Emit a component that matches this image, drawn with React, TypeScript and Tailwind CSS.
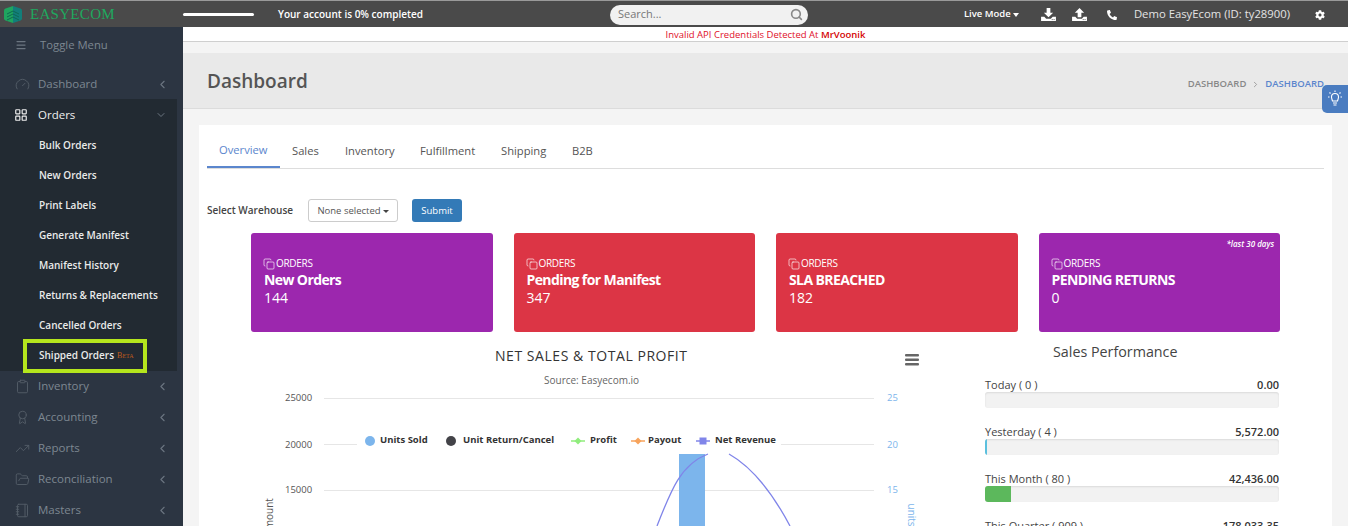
import { FC, ReactNode } from 'react';
import { Gauge, LayoutGrid, Clipboard, Award, TrendingUp, FolderOpen, Notebook, ChevronLeft, ChevronDown, ChevronRight, Menu, Search, Copy } from 'lucide-react';
import { FaPhone, FaCog } from 'react-icons/fa';

const subItems = ['Bulk Orders', 'New Orders', 'Print Labels', 'Generate Manifest', 'Manifest History', 'Returns & Replacements', 'Cancelled Orders'];

const lowerMenu = [
  { label: 'Inventory', icon: <Clipboard size={15} strokeWidth={1.5} /> },
  { label: 'Accounting', icon: <Award size={15} strokeWidth={1.5} /> },
  { label: 'Reports', icon: <TrendingUp size={15} strokeWidth={1.5} /> },
  { label: 'Reconciliation', icon: <FolderOpen size={15} strokeWidth={1.5} /> },
  { label: 'Masters', icon: <Notebook size={15} strokeWidth={1.5} /> },
];

const MenuRow: FC<{ label: string; icon: ReactNode }> = ({ label, icon }) => (
  <div className="h-[31px] flex items-center pb-[1px] pl-[15px] pr-[14px] text-[#7d8791] text-[11.5px]">
    <span className="w-[23px] shrink-0 text-[#535d68]">{icon}</span>
    <span className="flex-1">{label}</span>
    <ChevronLeft size={13} className="text-[#6b7580]" />
  </div>
);

const TrayIcon: FC<{ up?: boolean; className?: string }> = ({ up, className }) => (
  <svg width="15" height="13" viewBox="0 0 16 14" fill="white" className={className}>
    {up ? <path d="M8 0l5 5h-3v5H6V5H3z" /> : <path d="M6 0h4v5h3l-5 5-5-5h3z" />}
    <path d="M0 9.5h3.5l2 2h5l2-2H16V14H0z" />
    <rect x="11.5" y="12" width="1" height="1" fill="#4a4a4a" />
    <rect x="13.5" y="12" width="1" height="1" fill="#4a4a4a" />
  </svg>
);

const LegendMark: FC<{ color: string; shape: 'diamond' | 'square' }> = ({ color, shape }) => (
  <svg width="14" height="8" viewBox="0 0 14 8" className="shrink-0">
    <line x1="0" x2="14" y1="4" y2="4" stroke={color} strokeWidth="1.5" />
    {shape === 'diamond' ? <path d="M7 0.5l3.5 3.5-3.5 3.5-3.5-3.5z" fill={color} /> : <rect x="3.5" y="0.5" width="7" height="7" fill={color} />}
  </svg>
);

const StatCard: FC<{ title: string; value: string; color: string; note?: string }> = ({ title, value, color, note }) => (
  <div className={`${color} relative h-[99px] rounded-[3px] pl-[13px] pt-[24px] text-white`}>
    {note && <span className="absolute right-[6px] top-[5px] text-[8px] italic font-semibold">{note}</span>}
    <div className="flex items-center text-[10px] leading-[13px] tracking-[-0.3px]">
      <Copy size={12} strokeWidth={1.3} className="-ml-[1px] mr-[1px]" />
      ORDERS
    </div>
    <div className="text-[14px] leading-[20px] font-bold tracking-[-0.6px]">{title}</div>
    <div className="text-[14px] leading-[18px] -mt-[1px]">{value}</div>
  </div>
);

const PerfRow: FC<{ label: string; value: string; bar?: ReactNode }> = ({ label, value, bar }) => (
  <div className="h-[47px]">
    <div className="flex justify-between text-[11px] leading-[15px] text-[#444]">
      <span>{label}</span>
      <span className="font-semibold text-[#333]">{value}</span>
    </div>
    <div className="h-[16px] rounded-[3px] bg-[#f2f2f2] shadow-[inset_0_1px_2px_rgba(0,0,0,0.1)] overflow-hidden">{bar}</div>
  </div>
);

const App: FC = () => {
  return (
    <div className="w-[1348px] h-[526px] overflow-hidden bg-[#f4f4f4] font-['Open_Sans',sans-serif]">
      {/* top bar */}
      <div className="h-[27px] flex items-center bg-[#4a4a4a] border-t border-[#9a9a9a] pt-[1px] text-white">
        <div className="w-[183px] shrink-0 flex items-center pl-[4px]">
          <svg width="18" height="17" viewBox="0 0 18 17">
            <path d="M9 0 L1.5 2.5 Q0 3 0 4.5 L0 12.5 Q0 14 1.5 14.5 L9 17Z" fill="#1fa55f" />
            <path d="M9 0 L16.5 2.5 Q18 3 18 4.5 L18 12.5 Q18 14 16.5 14.5 L9 17Z" fill="#127e7a" />
            <path d="M3 8 L9 5 L15 8 M3 11 L9 8 L15 11 M3 14 L9 11 L15 14" fill="none" stroke="#0d6a52" strokeWidth="1" />
          </svg>
          <span className="ml-[8px] font-['Liberation_Serif',serif] text-[15px] tracking-[0.3px] text-[#20a85f]">EASYECOM</span>
        </div>
        <div className="w-[71px] h-[3px] rounded-full bg-white" />
        <span className="ml-[24px] text-[10px] font-semibold">Your account is 0% completed</span>
        <div className="ml-[187px] w-[198px] h-[20px] rounded-full bg-[#f1f1f1] flex items-center justify-between pl-[8px] pr-[5px] text-[#777] text-[11px]">
          Search...
          <Search size={13} strokeWidth={3} className="text-[#888]" />
        </div>
        <span className="ml-[156px] w-[55px] flex items-center justify-between text-[9.5px] font-semibold">
          Live Mode
          <i className="border-x-[3.5px] border-t-[4px] border-x-transparent border-t-white" />
        </span>
        <TrayIcon className="ml-[22px]" />
        <TrayIcon up className="ml-[16px]" />
        <FaPhone size={10} className="ml-[20px] scale-x-[-1]" />
        <span className="ml-[17px] text-[11.3px] text-[#e4e4e4]">Demo EasyEcom (ID: ty28900)</span>
        <FaCog size={10} className="ml-[25px]" />
      </div>

      <div className="flex h-[499px]">
        {/* sidebar */}
        <div className="w-[183px] shrink-0 bg-[#2c3542]">
          <div className="h-[35px] flex items-center pl-[15px] text-[#7d8791] text-[11.3px] pt-[1px]">
            <Menu size={12} strokeWidth={2.5} className="text-[#6b7580] mr-[13px]" />
            Toggle Menu
          </div>
          <div className="mt-[6px] pt-[1px] h-[31px]">
            <MenuRow label="Dashboard" icon={<Gauge size={15} strokeWidth={1.5} />} />
          </div>
          <div className="w-[177px] h-[272px] bg-[#222a32] text-white">
            <div className="h-[31px] flex items-center pt-[1px] pl-[14px] pr-[10px] text-[11.5px] text-[#eeeeee]">
              <LayoutGrid size={14} strokeWidth={2} className="mr-[10px]" />
              <span className="flex-1">Orders</span>
              <ChevronDown size={12} className="text-[#6b7580]" />
            </div>
            {subItems.map((item) => (
              <div key={item} className="h-[30px] flex items-center pt-[1px] pl-[39px] text-[10px] font-semibold text-[#eaeaea]">{item}</div>
            ))}
            <div className="relative ml-[23px] w-[124px] h-[34px] -mt-[1px] border-[4px] border-[#b5e61d] flex items-center pb-[1px] pl-[12px] text-[10px] font-semibold text-[#eaeaea]">
              Shipped Orders
              <span className="ml-[3px] text-[8px] font-normal [font-variant:small-caps] text-[#c05a1c] font-['Liberation_Serif',serif]">Beta</span>
            </div>
          </div>
          {lowerMenu.map((m) => <MenuRow key={m.label} {...m} />)}
        </div>

        {/* main */}
        <div className="relative flex-1 min-w-0">
          <div className="h-[14px] bg-white text-center text-[9.5px] leading-[16px] text-[#e0102a]">
            Invalid API Credentials Detected At <span className="font-semibold text-[#d40000]">MrVoonik</span>
          </div>
          <div className="h-px bg-[#cfcfcf]" />
          <div className="mt-[11px] h-[56px] bg-[#e9e9e9] border-b border-[#dcdcdc] flex items-center justify-between pl-[24px] pr-[24px]">
            <h1 className="text-[19px] font-semibold text-[#555] mt-[1px]">Dashboard</h1>
            <div className="flex items-center text-[9.5px] font-semibold text-[#888] mt-[8px]">
              DASHBOARD
              <ChevronRight size={9} strokeWidth={2} className="mx-[5px]" />
              <span className="text-[#5b86cd]">DASHBOARD</span>
            </div>
          </div>
          <div className="absolute left-[1139px] top-[58px] w-[26px] h-[28px] rounded-l-[5px] bg-[#4a7cc0] flex items-center justify-center">
            <svg width="16" height="18" viewBox="0 0 16 18" fill="none" stroke="white" strokeWidth="1.1">
              <path d="M5.5 11 C5 9 4.5 8.5 4.5 7 a3.5 3.5 0 0 1 7 0 C11.5 8.5 11 9 10.5 11z" />
              <path d="M6 13h4 M6.5 15h3 M8 0.5v1.5 M2.5 2.5l1 1 M13.5 2.5l-1 1 M1 7h1.5 M13.5 7H15" />
            </svg>
          </div>

          {/* content card */}
          <div className="ml-[16px] mr-[16px] mt-[16px] h-[420px] bg-white px-[8px] overflow-hidden">
            <div className="h-[44px] border-b border-[#ddd] flex items-center text-[11.2px] text-[#555] pl-[12px] pt-[9px]">
              <span className="relative w-[48px] text-[#5b86cd] -mt-[2px] whitespace-nowrap">
                Overview
                <span className="absolute -left-[12px] w-[73px] top-[24px] h-[2px] bg-[#5b86cd]" />
              </span>
              <span className="ml-[25px] w-[27px]">Sales</span>
              <span className="ml-[26px] w-[50px]">Inventory</span>
              <span className="ml-[25px] w-[56px]">Fulfillment</span>
              <span className="ml-[25px] w-[46px]">Shipping</span>
              <span className="ml-[25px]">B2B</span>
            </div>
            <div className="mt-[30px] flex items-center text-[10px] text-[#444]">
              <span className="font-semibold w-[101px]">Select Warehouse</span>
              <div className="w-[90px] h-[23px] rounded-[3px] border border-[#ccc] flex items-center justify-center gap-[2px] pt-[1px] text-[9.5px] text-[#555]">
                None selected
                <i className="border-x-[3px] border-t-[3px] border-x-transparent border-t-[#444]" />
              </div>
              <div className="ml-[14px] w-[50px] h-[23px] rounded-[3px] bg-[#337ab7] flex items-center justify-center pt-[1px] text-[9.5px] text-white">Submit</div>
            </div>
            <div className="mt-[11px] ml-[44px] w-[1029px] grid grid-cols-4 gap-[21px]">
              <StatCard title="New Orders" value="144" color="bg-[#9c27ae]" />
              <StatCard title="Pending for Manifest" value="347" color="bg-[#dc3545]" />
              <StatCard title="SLA BREACHED" value="182" color="bg-[#dc3545]" />
              <StatCard title="PENDING RETURNS" value="0" color="bg-[#9c27ae]" note="*last 30 days" />
            </div>

            <div className="flex">
              {/* chart */}
              <div className="relative w-[778px] h-[200px] shrink-0">
                <svg width="778" height="200" className="absolute left-0 top-0" viewBox="0 0 778 200">
                  <g stroke="#e6e6e6" strokeWidth="1">
                    <line x1="117" x2="667" y1="66.5" y2="66.5" />
                    <line x1="117" x2="667" y1="112.5" y2="112.5" />
                    <line x1="117" x2="667" y1="158.5" y2="158.5" />
                  </g>
                  <rect x="472" y="122" width="26" height="78" fill="#7cb5ec" />
                  <path d="M450 194 C464 158 474 132 501 122" fill="none" stroke="#8085e9" strokeWidth="1.3" />
                  <path d="M522 122 C545 135 565 160 583 194" fill="none" stroke="#8085e9" strokeWidth="1.3" />
                  <rect x="698" y="22" width="14" height="2.5" rx="1" fill="#666" />
                  <rect x="698" y="26.5" width="14" height="2.5" rx="1" fill="#666" />
                  <rect x="698" y="31" width="14" height="2.5" rx="1" fill="#666" />
                </svg>
                <div className="absolute left-[288px] top-[13px] text-[14px] tracking-[0.55px] text-[#333]">NET SALES &amp; TOTAL PROFIT</div>
                <div className="absolute left-[337px] top-[41px] text-[10px] text-[#666]">Source: Easyecom.io</div>
                {[['25000', 59], ['20000', 106], ['15000', 151]].map(([t, y]) => (
                  <div key={t} className="absolute left-[78px] text-[9.5px] text-[#555]" style={{ top: Number(y) }}>{t}</div>
                ))}
                {[['25', 59], ['20', 106], ['15', 151]].map(([t, y]) => (
                  <div key={t} className="absolute left-[680px] text-[9.5px] text-[#7cb5ec]" style={{ top: Number(y) }}>{t}</div>
                ))}
                <div className="absolute left-[62px] top-[196px] -rotate-90 origin-left text-[10px] text-[#555]">Amount</div>
                <div className="absolute left-[704px] top-[164px] rotate-90 origin-left text-[10px] text-[#7cb5ec]">units</div>
                <div className="absolute left-[150px] top-[97px] w-[424px] h-[22px] bg-white flex items-center pl-[8px] pt-[1px] text-[9.5px] font-bold text-[#333]">
                  <i className="w-[10px] h-[10px] rounded-full bg-[#7cb5ec] mr-[5px]" />
                  <span className="w-[49px]">Units Sold</span>
                  <i className="ml-[17px] w-[10px] h-[10px] rounded-full bg-[#434348] mr-[7px]" />
                  <span className="w-[92px]">Unit Return/Cancel</span>
                  <span className="ml-[16px] mr-[5px] flex"><LegendMark color="#90ed7d" shape="diamond" /></span>
                  <span className="w-[25px] whitespace-nowrap">Profit</span>
                  <span className="ml-[16px] mr-[3px] flex"><LegendMark color="#f7a35c" shape="diamond" /></span>
                  <span className="w-[33px]">Payout</span>
                  <span className="ml-[15px] mr-[5px] flex"><LegendMark color="#8085e9" shape="square" /></span>
                  <span className="whitespace-nowrap">Net Revenue</span>
                </div>
              </div>

              {/* sales performance */}
              <div className="w-[294px] pt-[10px]">
                <div className="pl-[68px] text-[14.3px] text-[#444] leading-[20px]">Sales Performance</div>
                <div className="mt-[15px]">
                  <PerfRow label="Today ( 0 )" value="0.00" />
                  <PerfRow label="Yesterday ( 4 )" value="5,572.00" bar={<div className="h-full w-[2px] bg-[#5bc0de]" />} />
                  <PerfRow label="This Month ( 80 )" value="42,436.00" bar={<div className="h-full w-[26px] bg-[#5cb85c]" />} />
                  <PerfRow label="This Quarter ( 909 )" value="178,033.35" />
                </div>
              </div>
            </div>
          </div>
        </div>
      </div>
    </div>
  );
};

export default App;
